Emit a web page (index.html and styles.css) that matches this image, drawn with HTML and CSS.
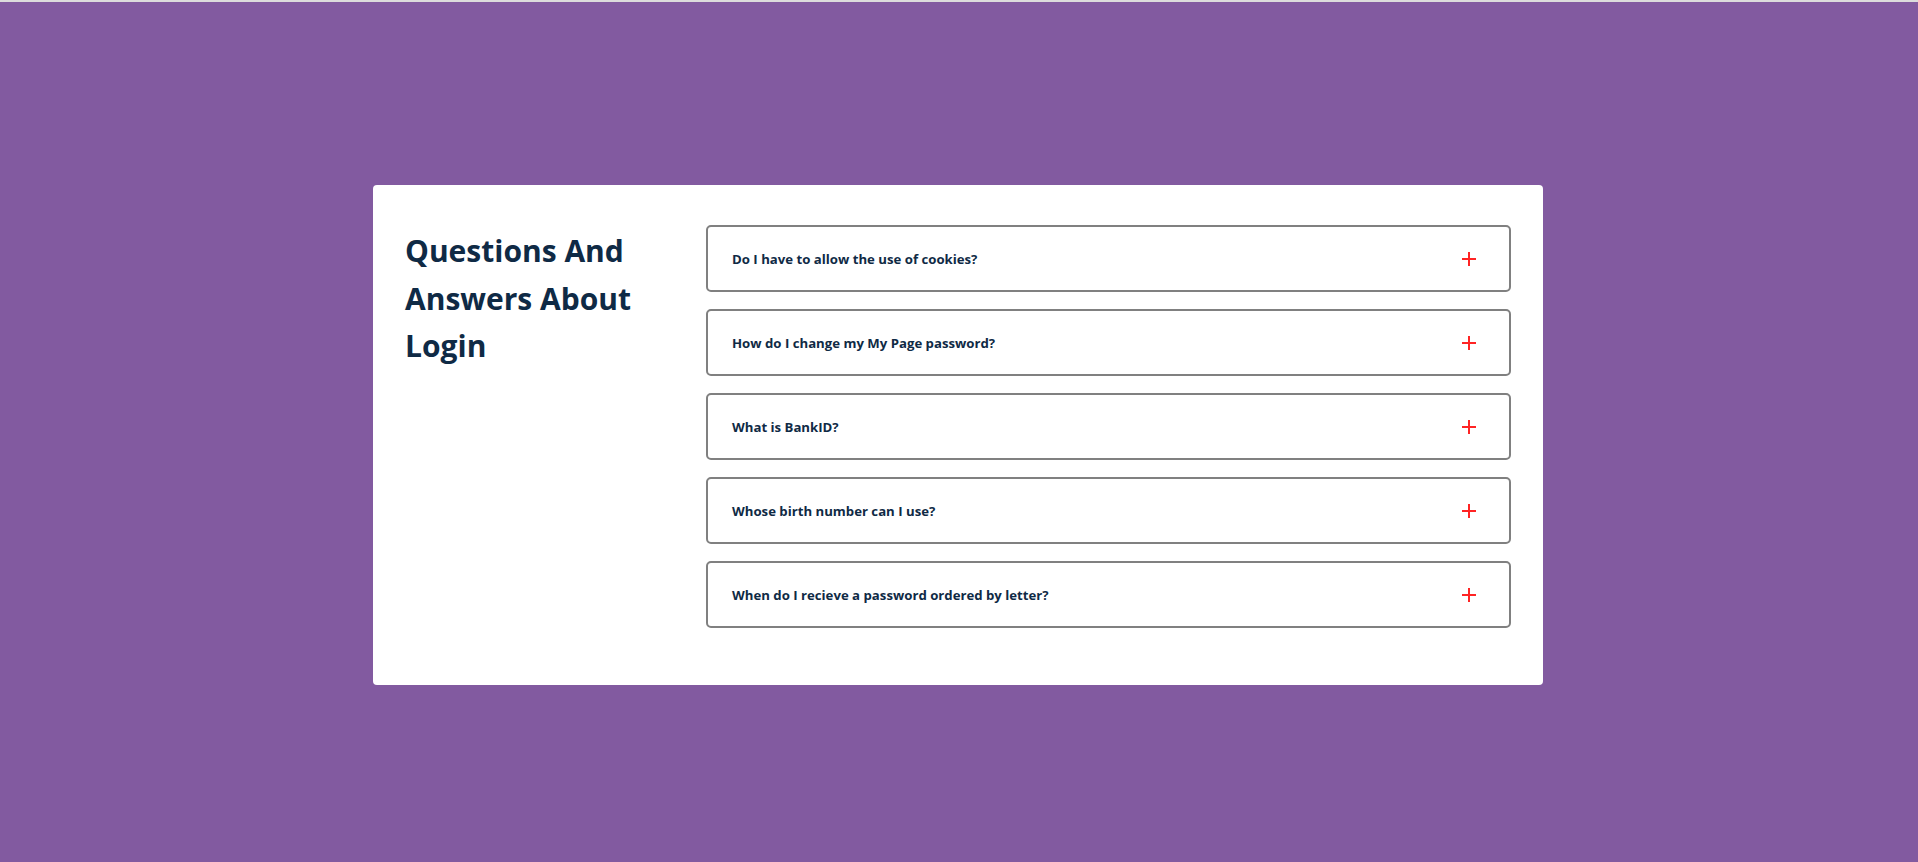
FILE: index.html
```html
<!DOCTYPE html>
<html lang="en">
<head>
<meta charset="utf-8">
<title>Questions And Answers About Login</title>
<link rel="stylesheet" href="styles.css">
</head>
<body>
<div class="topline"></div>
<main class="page">
  <section class="card">
    <h1 class="title">Questions And Answers About Login</h1>
    <div class="faq">
      <div class="item"><span class="q">Do I have to allow the use of cookies?</span><span class="plus"></span></div>
      <div class="item"><span class="q">How do I change my My Page password?</span><span class="plus"></span></div>
      <div class="item"><span class="q">What is BankID?</span><span class="plus"></span></div>
      <div class="item"><span class="q">Whose birth number can I use?</span><span class="plus"></span></div>
      <div class="item"><span class="q">When do I recieve a password ordered by letter?</span><span class="plus"></span></div>
    </div>
  </section>
</main>
</body>
</html>
```

FILE: styles.css
```css
* { box-sizing: border-box; }
html, body { margin: 0; padding: 0; }
body {
  background: #825aa0;
  font-family: "Open Sans", "Noto Sans", sans-serif;
  color: #0f2a45;
  height: 862px;
  overflow: hidden;
}
.topline { height: 2px; background: #dcdcdc; }
.page {
  display: flex;
  justify-content: center;
  padding-top: 183px;
  padding-right: 2px;
}
.card {
  width: 1170px;
  height: 500px;
  background: #fff;
  border-radius: 4px;
  padding: 40px 32px;
  display: grid;
  grid-template-columns: 301px 1fr;
  align-items: start;
}
.title {
  margin: 0;
  font-size: 30px;
  line-height: 47.5px;
  font-weight: 700;
  width: 245px;
  margin-top: 2px;
}
.faq { display: flex; flex-direction: column; gap: 17px; }
.item {
  height: 67px;
  border: 2px solid #808080;
  border-radius: 5px;
  display: flex;
  align-items: center;
  justify-content: space-between;
  padding: 0 33px 0 24px;
}
.q { font-size: 13.2px; font-weight: 700; }
.plus { position: relative; width: 14px; height: 14px; }
.plus::before, .plus::after {
  content: "";
  position: absolute;
  background: #ff2424;
}
.plus::before { left: 0; right: 0; top: 6px; height: 2px; }
.plus::after { top: 0; bottom: 0; left: 6px; width: 2px; }
```
